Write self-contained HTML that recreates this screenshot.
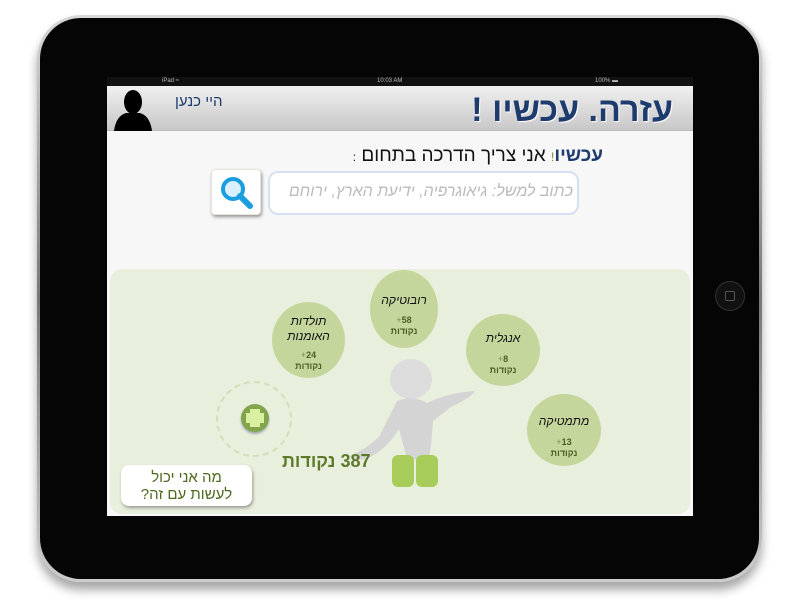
<!DOCTYPE html>
<html><head><meta charset="utf-8"><style>
*{margin:0;padding:0;box-sizing:border-box}
body{width:800px;height:600px;background:#fff;position:relative;overflow:hidden;font-family:"Liberation Sans","Noto Sans CJK SC",sans-serif}
.a{position:absolute}
.ipad{left:37px;top:15px;width:725px;height:567px;border-radius:44px;background:linear-gradient(#d8d8d8,#777 50%,#ccc);box-shadow:0 8px 10px rgba(0,0,0,.35)}
.bezel{left:40px;top:18px;width:719px;height:561px;border-radius:41px;background:#050505}
.screen{left:107px;top:77px;width:586px;height:439px;background:#f7f7f7;overflow:hidden}
.circ{position:absolute;border-radius:50%;background:#c5d69c;text-align:center;color:#111;font-style:italic;font-size:12px}
.pt{font-style:normal;font-size:9px;color:#4d5c26;font-weight:bold;line-height:11px}
.pt b{color:#7a8f3c;font-weight:normal}
</style></head><body>
<div class="a ipad"></div>
<div class="a bezel"></div>
<div class="a" style="left:715px;top:281px;width:30px;height:30px;border-radius:50%;background:#111;border:1px solid #333"></div>
<div class="a" style="left:725px;top:291px;width:10px;height:10px;border:1px solid #555;border-radius:2px"></div>
<div class="a screen">
 <div class="a" style="left:0;top:0;width:586px;height:9px;background:#111;color:#bbb;font-size:6px;line-height:9px">
  <span class="a" style="left:55px">iPad ≈</span><span class="a" style="left:270px">10:03 AM</span><span class="a" style="left:488px">100% ▬</span></div>
 <div class="a" style="left:0;top:9px;width:586px;height:45px;background:linear-gradient(#f0f0f0,#c8c8c8);border-bottom:1px solid #bbb"></div>
 <svg class="a" style="left:5px;top:12px" width="42" height="42" viewBox="0 0 42 42"><ellipse cx="21" cy="13" rx="9" ry="12" fill="#000"/><path d="M2 42 Q4 27 14 24 L28 24 Q38 27 40 42 Z" fill="#000"/></svg>
 <div class="a" style="left:68px;top:16px;font-size:15px;color:#1e3b6e;direction:rtl">היי כנען</div>
 <div class="a" style="right:20px;top:14px;font-size:34px;font-weight:bold;color:#1e3b6e;direction:rtl;text-shadow:1px 1px 1px #fff">עזרה. עכשיו !</div>
 <div class="a" style="right:90px;top:68px;font-size:19px;color:#111;direction:rtl"><span style="color:#1e3b6e;font-weight:bold">עכשיו</span><span style="color:#7a8f3c;font-size:12px">!</span> אני צריך הדרכה בתחום <span style="font-size:12px">:</span></div>
 <div class="a" style="left:104px;top:92px;width:50px;height:46px;background:#fff;border-radius:4px;box-shadow:1px 2px 3px rgba(0,0,0,.4);border:1px solid #e8e4d8"></div>
 <svg class="a" style="left:111px;top:97px" width="38" height="38" viewBox="0 0 38 38"><circle cx="15" cy="15" r="10" fill="#d8f0ff" stroke="#1a9ee0" stroke-width="4"/><line x1="22" y1="22" x2="32" y2="32" stroke="#1a9ee0" stroke-width="6" stroke-linecap="round"/></svg>
 <div class="a" style="left:161px;top:94px;width:311px;height:44px;background:#fff;border:2px solid #d5e1f0;border-radius:10px"></div>
 <div class="a" style="right:120px;top:106px;font-size:16px;color:#bbb;font-style:italic;direction:rtl">כתוב למשל: גיאוגרפיה, ידיעת הארץ, ירוחם</div>
 <div class="a" style="left:3px;top:192px;width:580px;height:245px;background:#e9efdd;border-radius:12px"></div>
 <div class="circ" style="left:263px;top:193px;width:68px;height:78px"><div style="margin-top:23px">רובוטיקה</div><div class="pt" style="margin-top:8px"><b>+</b>58<br>נקודות</div></div>
 <div class="circ" style="left:165px;top:225px;width:73px;height:76px"><div style="margin-top:12px;line-height:15px">תולדות<br>האומנות</div><div class="pt" style="margin-top:6px"><b>+</b>24<br>נקודות</div></div>
 <div class="circ" style="left:359px;top:237px;width:74px;height:72px"><div style="margin-top:17px">אנגלית</div><div class="pt" style="margin-top:9px"><b>+</b>8<br>נקודות</div></div>
 <div class="circ" style="left:420px;top:317px;width:74px;height:72px"><div style="margin-top:20px">מתמטיקה</div><div class="pt" style="margin-top:9px"><b>+</b>13<br>נקודות</div></div>
 <div class="a" style="left:109px;top:304px;width:76px;height:76px;border-radius:50%;border:2px dashed #d5deb8"></div>
 <div class="a" style="left:134px;top:327px;width:28px;height:28px;border-radius:50%;background:#82a44a;box-shadow:0 2px 2px #9aa"></div>
 <div class="a" style="left:143px;top:332px;width:10px;height:18px;background:#d8f0a0"></div>
 <div class="a" style="left:139px;top:336px;width:18px;height:10px;background:#d8f0a0"></div>
 <svg class="a" style="left:240px;top:282px" width="130" height="132" viewBox="0 0 130 132">
  <ellipse cx="64" cy="20" rx="21" ry="20" fill="#dcdcdc"/>
  <path d="M50 42 Q66 36 80 44 Q100 34 128 32 Q125 38 104 48 L86 62 Q84 90 82 100 L60 100 Q56 85 52 70 Q40 90 20 100 Q2 102 4 96 Q16 92 32 78 Z" fill="#d4d4d4"/>
  <rect x="45" y="96" width="22" height="32" rx="6" fill="#a8cc5a"/>
  <rect x="69" y="96" width="22" height="32" rx="6" fill="#a8cc5a"/>
 </svg>
 <div class="a" style="left:175px;top:374px;font-size:18px;font-weight:bold;color:#5d7a2a;direction:rtl">387 נקודות</div>
 <div class="a" style="left:14px;top:388px;width:131px;height:41px;background:#fff;border-radius:8px;box-shadow:1px 2px 3px rgba(0,0,0,.35);text-align:center;font-size:15px;line-height:17px;color:#4d6a1e;direction:rtl;padding-top:4px">מה אני יכול<br>לעשות עם זה?</div>
</div>
</body></html>
